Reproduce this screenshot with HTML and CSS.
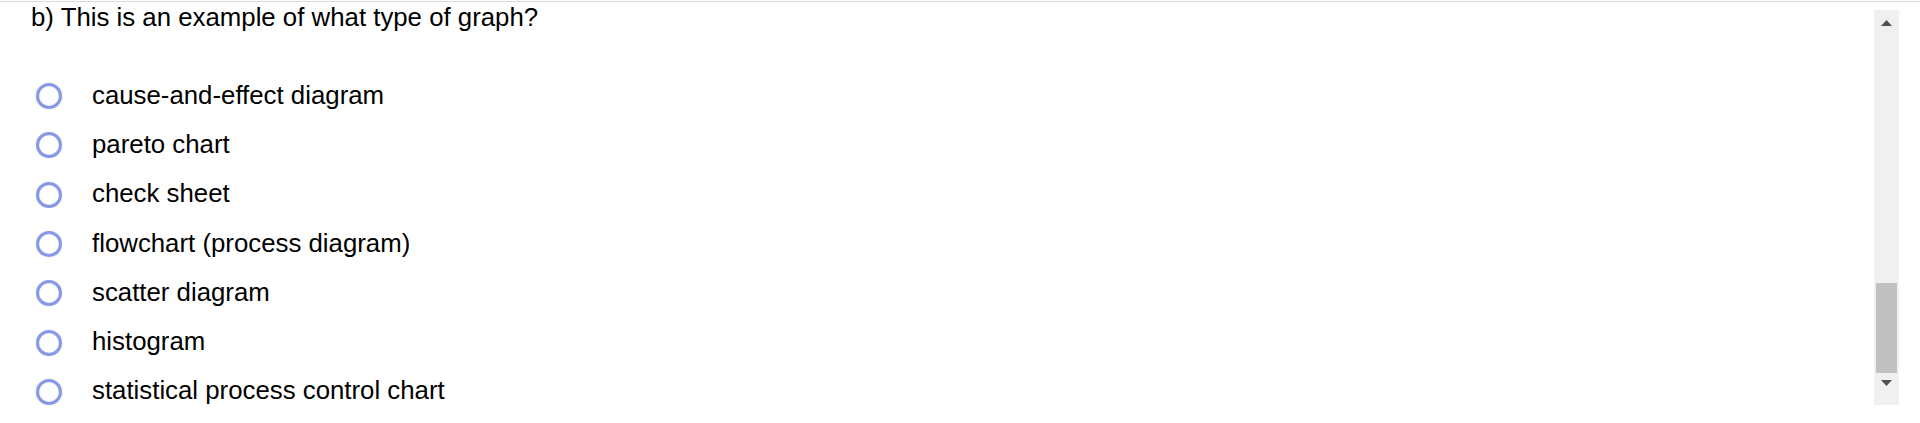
FILE: index.html
```html
<!DOCTYPE html>
<html lang="en">
<head>
<meta charset="utf-8">
<title>Question</title>
<link rel="stylesheet" href="styles.css">
</head>
<body>
<div class="frame">
  <div class="content">
    <div class="question">b) This is an example of what type of graph?</div>
    <ul class="options">
      <li class="option"><span class="radio"></span><span class="label">cause-and-effect diagram</span></li>
      <li class="option"><span class="radio"></span><span class="label">pareto chart</span></li>
      <li class="option"><span class="radio"></span><span class="label">check sheet</span></li>
      <li class="option"><span class="radio"></span><span class="label">flowchart (process diagram)</span></li>
      <li class="option"><span class="radio"></span><span class="label">scatter diagram</span></li>
      <li class="option"><span class="radio"></span><span class="label">histogram</span></li>
      <li class="option"><span class="radio"></span><span class="label">statistical process control chart</span></li>
    </ul>
  </div>
  <div class="scrollbar">
    <div class="sb-btn sb-up"><svg width="11" height="6" viewBox="0 0 11 6"><polygon points="5.5,0 11,6 0,6" fill="#505050"/></svg></div>
    <div class="sb-track"><div class="sb-thumb"></div></div>
    <div class="sb-btn sb-down"><svg width="11" height="6" viewBox="0 0 11 6"><polygon points="0,0 11,0 5.5,6" fill="#505050"/></svg></div>
  </div>
</div>
</body>
</html>
```
FILE: styles.css
```css
html, body {
  margin: 0;
  padding: 0;
  background: #ffffff;
}
body {
  font-family: "Liberation Sans", Arial, sans-serif;
  color: #000000;
}
.frame {
  margin-top: 1px;
  border-top: 1px solid #d9d9de;
  display: flex;
  height: 421px;
}
.content {
  flex: 1;
  padding-left: 31px;
}
.question {
  font-size: 25.8px;
  line-height: 30px;
  padding-top: 0;
}
.options {
  list-style: none;
  margin: 38px 0 0 0;
  padding: 0;
}
.option {
  display: flex;
  align-items: center;
  height: 49.3px;
}
.radio {
  box-sizing: border-box;
  width: 26px;
  height: 26px;
  border-radius: 50%;
  border: 3px solid #8799e6;
  box-shadow: 0 0 1px rgba(135, 153, 230, 0.6), inset 0 0 1px rgba(135, 153, 230, 0.6);
  margin-left: 5px;
  margin-right: 30px;
  margin-top: 3px;
  flex: none;
}
.label {
  font-size: 25.8px;
  line-height: 30px;
}
.scrollbar {
  flex: none;
  width: 25px;
  height: 395px;
  margin-top: 8px;
  margin-right: 21px;
  background: #f0f0f0;
  display: flex;
  flex-direction: column;
}
.sb-btn {
  display: flex;
  justify-content: center;
  align-items: flex-start;
}
.sb-btn svg {
  display: block;
}
.sb-up {
  height: 26px;
  padding-top: 10px;
  box-sizing: border-box;
}
.sb-down {
  height: 32px;
  padding-top: 7px;
  box-sizing: border-box;
}
.sb-track {
  flex: 1;
  display: flex;
  flex-direction: column;
  justify-content: flex-end;
  padding: 0 2px;
}
.sb-thumb {
  height: 90px;
  background: #c0c0c0;
}
```
